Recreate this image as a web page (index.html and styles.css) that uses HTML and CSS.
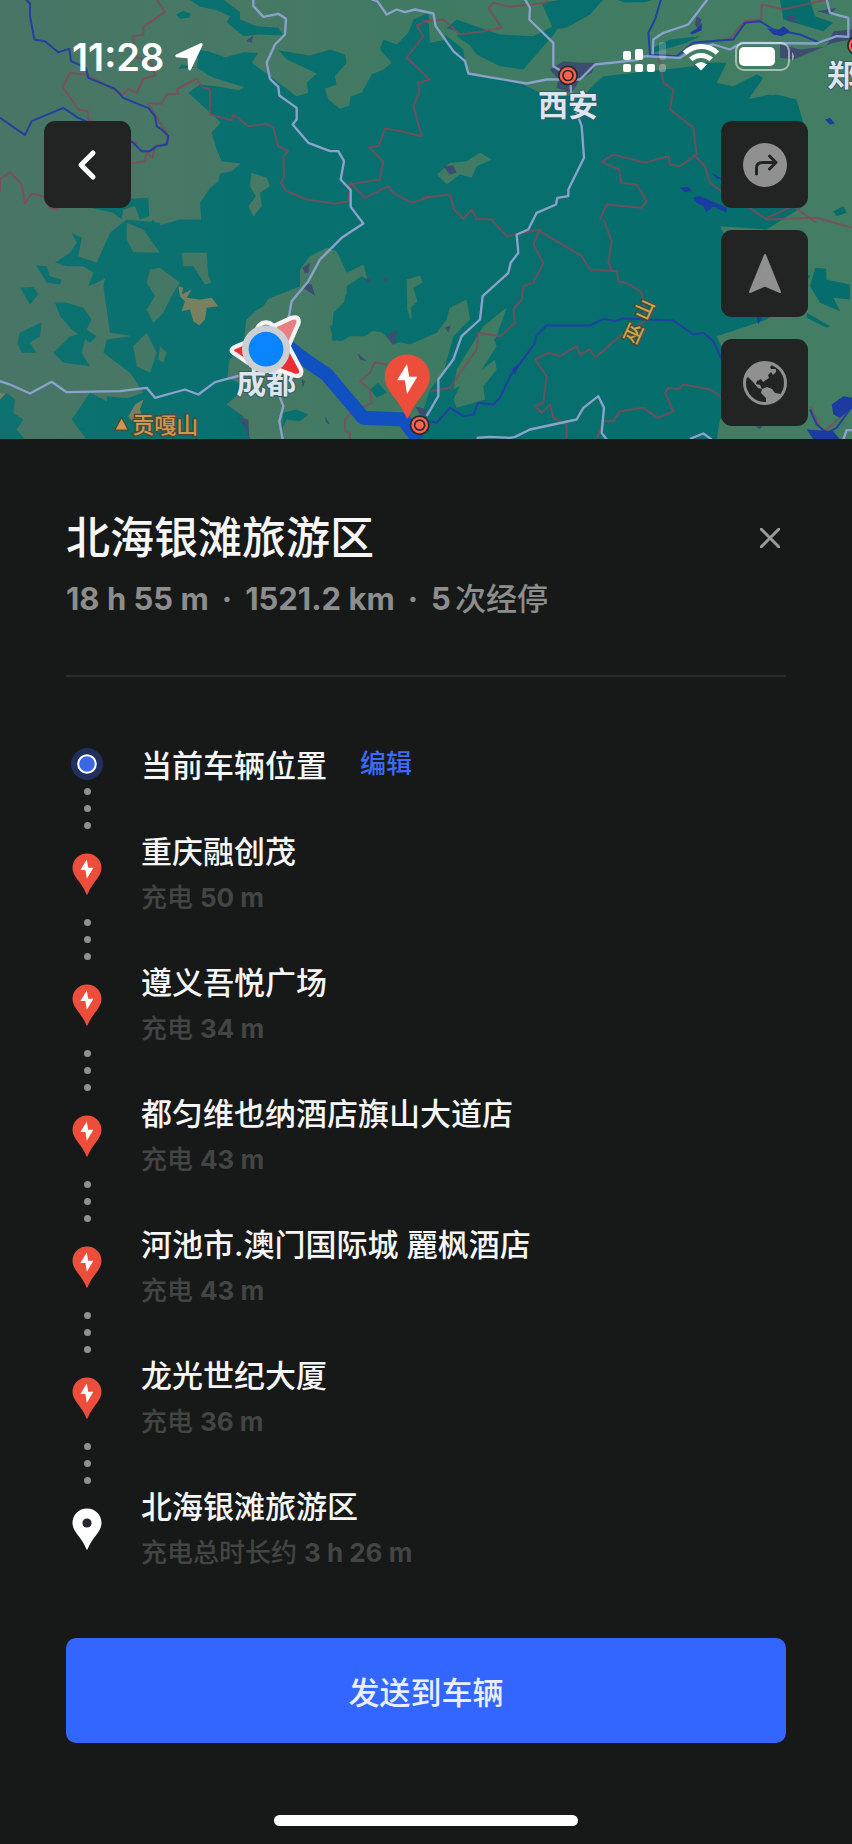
FILE: index.html
```html
<!DOCTYPE html>
<html lang="zh-CN">
<head>
    <meta charset="UTF-8">
    <meta name="viewport" content="width=device-width, initial-scale=1.0">
    <title>北海银滩旅游区</title>
    <link rel="stylesheet" href="styles.css">
</head>
<body>
<svg class="symbols" aria-hidden="true">
    <symbol id="charge-pin" viewBox="0 0 30 42">
        <path fill="#ed4d3b" d="M15 0.5C6.8 0.5 0.5 6.8 0.5 14.8C0.5 19 2.4 22.4 5 26C8.500 30.500 12.500 36 14.200 40.800Q15 42.600 15.800 40.800C17.500 36 21.500 30.500 25 26C27.600 22.400 29.500 19 29.500 14.800C29.500 6.800 23.200 0.500 15 0.500Z"/>
        <path fill="#fff" d="M14.800 6.600L8.400 17H13.400L14.800 25.800L21.400 14.800H16.200Z"/>
    </symbol>
    <symbol id="place-pin" viewBox="0 0 30 42">
        <path fill="#fff" d="M15 0.5C6.8 0.5 0.5 6.8 0.5 14.8C0.5 19 2.4 22.4 5 26C8.500 30.500 12.500 36 14.200 40.800Q15 42.600 15.800 40.800C17.500 36 21.500 30.500 25 26C27.600 22.400 29.500 19 29.500 14.800C29.500 6.800 23.200 0.500 15 0.500Z"/>
        <circle cx="15" cy="15" r="4.600" fill="#25272e"/>
    </symbol>
    <symbol id="city" viewBox="0 0 60 60">
        <circle cx="30" cy="30" r="29" fill="#2b2729"/>
        <circle cx="30" cy="30" r="24" fill="#fb6250"/>
        <circle cx="30" cy="30" r="17" fill="#2b2729"/>
        <circle cx="30" cy="30" r="12" fill="#fb6250"/>
    </symbol>
</svg>

<header class="map">
    <svg class="map-canvas" viewBox="0 0 2556 1320" preserveAspectRatio="xMidYMid slice" role="img" aria-label="路线地图">
        <defs>
            <linearGradient id="land" gradientUnits="userSpaceOnUse" x1="0" y1="0" x2="2556" y2="0">
                <stop offset="0" stop-color="#487566"/>
                <stop offset="0.3" stop-color="#477965"/>
                <stop offset="0.5" stop-color="#3f7a62"/>
                <stop offset="1" stop-color="#437e64"/>
            </linearGradient>
            <linearGradient id="forest" gradientUnits="userSpaceOnUse" x1="0" y1="0" x2="2556" y2="0">
                <stop offset="0" stop-color="#0d7270"/>
                <stop offset="0.3" stop-color="#08706f"/>
                <stop offset="1" stop-color="#056d6b"/>
            </linearGradient>
        </defs>
        <rect width="2556" height="1320" fill="url(#forest)"/>

        <!-- open land -->
        <g fill="url(#land)">
            <path d="M0 0H1680L1640 30L1660 80L1600 110L1500 105L1440 85L1370 60L1330 95L1340 120L1290 130L1285 40L1240 60L1225 100L1190 135L1150 120L1140 150L1175 190L1150 210L1115 225L1085 280L1052 290L1048 318L1020 328L985 300L975 268L1010 255L1005 230L1040 190L1035 165L990 150L930 168L835 152L860 180L950 222L920 250L925 280L890 290L830 245L755 190L775 160L730 158L650 180L600 150L590 205L640 235L690 250L735 262L715 272L660 262L600 255L565 280L625 335L662 368L635 400L650 450L665 485L722 492L695 515L660 522L655 545L630 565L600 610L605 680L580 720L560 760L480 700L460 660L440 680L480 750L435 790L330 770L310 860L330 1000L400 1010L450 1130L430 1200L320 1190L330 1320H0Z"/>
            <path d="M1266 60L1310 85L1390 150L1400 220L1550 245L1640 290L1760 280L1800 235L1870 190H2180L2150 250L2200 260L2270 225L2290 235L2245 300L2330 285L2390 300L2410 370V620L2300 690L2160 680L2180 720L2350 770L2430 830L2400 880L2300 960L2150 1010L2180 1080L2300 1180L2160 1260L2150 1320H2556V0H1960L1900 20L1850 0H1740L1690 40L1670 90L1640 165L1570 210L1500 200L1430 165L1380 100Z"/>
            <path d="M1570 210L1640 130L1700 60L1850 10L2290 0L2300 70L2180 130L2080 200L1810 230L1740 290L1620 285Z"/>
            <path d="M980 745L1010 755L1040 820L1090 795L1105 850L1060 860L1035 890L1025 960L990 980L1000 1025L1100 990L1150 1000L1180 1035L1250 1010L1300 950L1400 900L1410 960L1360 1010L1330 1120L1290 1170L1240 1320H750L730 1250L680 1215L740 1160L670 1130L690 1080L730 1040L740 950L790 920L830 860L900 810L930 770Z"/>
            <path d="M1220 840L1260 828L1268 848L1240 865L1252 905L1232 925L1238 980L1222 930Z"/>
            <path d="M1311 525L1350 490L1400 485L1440 460L1475 480L1430 500L1415 535L1380 525L1340 555Z"/>
            <path d="M445 770L490 740L470 690L560 700L610 660L600 720L540 770L560 800L620 830L632 850L618 857L580 810L545 800L530 870L540 900L490 960L470 1010L500 1060L450 1040Z"/>
            <path d="M755 520L800 535L810 560L780 580L785 620L760 650L745 620L768 590L750 560Z"/>
            <path d="M1520 924L1490 1010L1430 1090L1400 1150L1360 1170L1370 1110L1450 980Z"/>
            <path d="M1440 1040L1480 1015L1490 1040L1400 1180L1360 1200Z"/>
            <path d="M1485 1080L1490 1110L1450 1160L1455 1200L1370 1225L1360 1200L1420 1130Z"/>
        </g>

        <!-- forest patches -->
        <g fill="url(#forest)">
            <path d="M568 0L600 22L650 32L690 50L680 68L700 85L730 110L780 105L850 108L835 85L770 80L720 60L720 38L690 15L670 0Z"/>
            <path d="M528 45L550 34L572 42L568 55L540 58Z"/>
            <path d="M580 150L625 155L680 175L740 160L760 180L755 190L830 245L835 300L740 265L690 250L620 225Z"/>
            <path d="M590 205L535 208L545 195Z"/>
            <path d="M270 625L350 600L445 595L448 650L420 660L405 620L370 630L365 660L340 640Z"/>
            <path d="M1545 115L1500 150L1450 165L1370 110L1390 85L1450 95Z"/>
            <path d="M1625 10L1690 0H1810L1770 45L1700 85L1660 90Z"/>
            <path d="M2340 0H2430L2445 50L2500 70L2470 95L2350 60Z"/>
            <path d="M1960 145L2010 120L2100 110L2060 130L1960 160Z"/>
            <path d="M2240 300L2310 285L2380 310L2410 370H2160L2180 330Z"/>
            <path d="M2440 825L2445 805L2478 808L2480 840L2550 855V900L2500 895L2520 935L2460 910L2430 860Z"/>
            <path d="M2420 940L2490 980L2480 985L2420 955ZM2500 635L2530 620L2540 640L2510 650Z"/>
            <path d="M215 700L245 715L235 770L290 790L330 700L380 660L480 670L490 730L430 770L400 800L330 830L290 850L265 860L280 820L250 800L200 800L165 790L210 760L230 730Z"/>
            <path d="M108 797L140 800L150 830L185 840L180 855L140 850ZM60 865L100 862L115 885L90 915Z"/>
            <path d="M335 720L540 660H900V860L800 900L740 960L690 1060L680 1160L640 1200L560 1320H380L400 1240L350 1250L340 1210L430 1180L390 1120L310 1060L320 1020L390 1010L370 970L385 920L400 880L405 820L300 800Z"/>
            <path d="M165 910L195 908L250 925L275 960L260 990L290 1010L270 1030L215 990L180 950Z"/>
            <path d="M60 1000L125 968L120 1010L90 1030L110 1060L65 1060L52 1030ZM160 1060L210 1010L260 1000L245 1060L270 1100L190 1090Z"/>
            <path d="M20 1180L45 1200L40 1240L70 1260L50 1290L75 1320H0V1200ZM215 1260L270 1180L330 1210L350 1320H260Z"/>
            <path d="M1040 860L1085 830L1120 850L1105 900L1125 950L1200 990L1270 920H1350L1340 960L1310 1000L1230 1035L1170 1020L1130 985L1095 1010L1050 1010L1025 1025L995 1020L1000 940L1040 900Z"/>
            <path d="M850 1240L890 1230L925 1245L900 1265L860 1260L845 1290ZM1110 1170L1135 1150L1160 1180L1130 1195Z"/>
        </g>

        <!-- land showing through the western forest -->
        <g fill="#447865">
            <path d="M450 810L480 805L540 850L520 880L490 940L460 970L440 930L465 890L440 850Z"/>
            <path d="M545 760H620L625 830L635 850L615 855L580 800H550Z"/>
            <path d="M400 1040L440 1000L470 1060L450 1120L410 1100ZM480 1040L500 1060L490 1090L475 1080Z"/>
            <path d="M380 670L430 690L480 760L400 758L380 720Z"/>
        </g>

        <!-- bare rock -->
        <g fill="#79805f">
            <path d="M535 860L550 865L545 885L575 870L560 895L600 900L635 895L655 920L620 925L615 960L598 978L580 965L570 930L545 935L555 905L540 890Z"/>
            <path d="M430 1200L420 1230L428 1255L400 1270L385 1250L405 1215ZM0 1180L15 1185L0 1200Z"/>
        </g>

        <!-- built-up areas -->
        <g fill="#3d4d70">
            <path d="M1650 210L1690 185L1740 190L1790 190L1775 220L1740 240L1715 280L1670 265L1675 240Z"/>
            <path d="M1330 500L1360 498L1370 520L1350 525ZM2340 135L2400 150L2480 140L2500 95L2556 90V120L2500 130L2430 160L2380 180L2340 175Z"/>
            <path d="M2090 50L2105 60L2095 90L2085 75ZM2360 50L2385 48L2388 70L2365 65ZM2450 35L2510 25L2490 45Z"/>
            <path d="M908 805L930 790L925 820L915 822ZM915 850L935 855L945 888L912 868ZM1160 1010L1190 990L1188 1030L1178 1035ZM1072 1060L1100 1085L1080 1080Z"/>
            <path d="M1095 838H1112V850H1098ZM1150 832L1165 838L1158 850ZM715 1255L745 1260L748 1320L735 1280ZM975 1250L990 1275L978 1268ZM905 1140L915 1145L908 1165Z"/>
            <path d="M738 125L760 107L755 130ZM1335 985L1352 978L1345 1000ZM2050 560L2075 570L2060 580ZM2260 1275H2290L2280 1290ZM1245 1220L1280 1230L1270 1260Z"/>
        </g>

        <!-- provincial borders -->
        <g class="border">
            <path d="M470 0L495 38L430 82V105L400 110V170L455 190L465 228L430 238L410 280L385 268L370 285L340 268L255 225L210 220L188 262L235 330L262 335L265 360L408 430L400 440"/>
            <path d="M395 492L435 485L440 458L458 475L465 440L505 430L500 400L480 370L445 312L485 312L500 285L535 283L530 270L590 237L605 262L630 270V345L695 362L700 345L745 380L800 373L820 385L835 440L865 455L850 470L852 530L843 550L860 575L920 600L1005 613L1045 605L1052 550L1095 595L1165 560L1180 580L1235 610L1290 592"/>
            <path d="M0 575V540L30 518L65 555L75 612L95 582L130 590L150 625L175 630"/>
            <path d="M1290 62L1250 78L1270 110L1220 175L1290 240L1255 250L1258 280L1240 320L1265 410L1190 392L1155 388L1135 440L1107 443L1150 485L1140 540L1045 555"/>
            <path d="M1270 65L1330 60L1380 105L1450 95L1505 85L1465 25L1480 10L1530 22L1640 10V0"/>
            <path d="M1976 175L1990 250L2020 270L2010 330L2080 385L2090 465L2040 500L2010 495L2005 470L1935 490L1840 465L1805 487L1858 510L1863 550L1910 555L1940 605L1925 625L1820 615L1800 660"/>
            <path d="M2080 465L2115 500L2130 550L2170 580L2240 620L2300 660L2450 655L2556 685"/>
            <path d="M1266 595L1350 585L1363 630L1390 658L1415 630L1430 658L1475 660L1520 710L1620 690L1600 735L1630 790L1600 850L1570 860L1565 900L1540 930L1545 970L1500 1010L1435 1000L1430 1050L1350 1165L1290 1175"/>
            <path d="M1620 695L1745 770L1770 810L1850 815L1855 845L1890 855L1925 880L1935 935L1935 965L1860 1010L1785 1075L1770 1050L1740 1065L1730 1040L1680 1070L1645 1060L1605 1080L1640 1130L1630 1210L1605 1220L1625 1240L1650 1215L1660 1255L1700 1275V1320"/>
            <path d="M1810 660L1835 725L1825 790L1835 812M1790 1320L1810 1265L1840 1265L1860 1235L1930 1225L1975 1255L2020 1235L1995 1180L2005 1165L2035 1170L2050 1155L2130 1170L2190 1210"/>
            <path d="M1160 1095L1125 1088L1110 1120L1080 1145L1110 1170L1115 1210L1050 1245L1035 1260V1295L1050 1300V1320"/>
            <path d="M2140 125L2190 118L2235 65L2284 60L2285 15L2350 30L2480 0M2300 655L2380 620L2450 670M2430 1220L2470 1300L2556 1220"/>
        </g>

        <!-- rivers -->
        <g class="river">
            <path d="M78 0L90 12L90 50L103 120L135 125L175 158L208 148L213 185L258 205L265 235L345 268L370 295L430 320L445 325L465 350L470 380L485 390L505 410L500 435L470 440L450 455L425 455L400 430L235 355L190 325L95 365L75 407L0 355"/>
            <path d="M1983 0L1965 60L1945 100L1950 165L2030 170L2080 130L2130 125L2200 120L2235 70L2280 65L2320 90L2400 105L2460 130L2510 110"/>
            <path d="M1290 1265L1310 1270L1350 1225L1390 1250L1420 1245L1435 1210L1480 1215L1500 1195L1530 1130L1555 1100L1605 1030L1608 1010L1640 978L1770 978L1810 958L1845 965L1870 957L2020 963L2080 1005L2110 1000L2140 1025L2165 1080"/>
            <path d="M2430 1230L2450 1275L2480 1300L2510 1285L2556 1220"/>
        </g>
        <g fill="#1b3ba1">
            <path d="M2300 85L2330 95L2350 80L2370 95L2345 110L2320 105ZM2070 100L2095 85L2105 70V92L2075 105Z"/>
            <path d="M2040 565L2065 562L2075 575L2055 578ZM2080 595L2100 590L2125 600L2180 625V640L2140 620L2120 638L2110 620L2090 610ZM2135 520L2170 540L2150 538ZM2475 360L2490 355L2505 372L2490 375Z"/>
            <path d="M2495 1215L2530 1190L2556 1195V1225L2520 1255L2500 1245ZM2270 950L2285 955L2275 975ZM2420 1290L2500 1295L2520 1320H2440ZM1535 1110L1560 1090L1545 1125Z"/>
        </g>

        <!-- motorways -->
        <path class="road" d="M760 0V20L790 52L835 43L858 58L855 105L825 135L800 190L810 238L835 262L838 288L890 325V360L878 375L925 430L990 455L1015 455L1032 485L1022 540L1052 572V622L1090 672L1025 715L960 780L925 845L875 905L865 960"/>
        <path class="road" d="M1115 0L1132 5L1160 45L1190 30L1215 38L1245 30L1300 42L1307 80L1360 155L1395 185L1405 222L1480 235L1580 252L1640 240L1740 240L1785 195L1910 182L1935 170L2040 175L2080 150L2140 135L2190 150L2225 130L2450 132L2510 110L2545 112V55L2490 40L2480 0"/>
        <path class="road" d="M1575 0L1590 25L1588 60L1660 130V200L1710 230L1715 300L1745 380L1752 475L1705 570V590L1672 595L1668 615L1610 640L1585 690L1550 705L1555 760L1532 790L1525 820L1448 890L1440 960L1385 1010L1360 1080L1315 1140V1190L1280 1250"/>
        <path class="road" d="M2122 0L2065 75L1990 100L1960 120L1958 165"/>
        <path class="road" d="M0 1145L30 1155L90 1182L155 1147L200 1178L360 1175L440 1165L465 1195L555 1170L595 1185L645 1148L720 1128M835 1180L850 1220L838 1265L848 1320"/>
        <path class="road" d="M1430 1315L1470 1312L1530 1315L1545 1312L1590 1290L1730 1260L1750 1225L1795 1190L1812 1225L1805 1300L1820 1320M2070 1318L2110 1302L2135 1320M2530 1320L2540 1292H2556"/>

        <path class="route" d="M850 1030L900 1070L980 1125L1090 1255L1210 1260L1255 1320"/>

        <use href="#city" x="1673" y="197" width="62" height="62"/>
        <use href="#city" x="2540" y="107" width="62" height="62"/>
        <use href="#city" x="1228" y="1246" width="62" height="62"/>

        <g class="place">
            <text x="1614" y="350">西安</text>
            <text x="2481" y="259">郑</text>
            <text x="709" y="1180">成都</text>
        </g>
        <g class="peak">
            <path d="M365 1258L347 1290H382Z"/>
            <text x="397" y="1301">贡嘎山</text>
            <text class="range" transform="translate(1908 1038) rotate(-66)">巫</text>
            <text class="range" transform="translate(1940 966) rotate(-66)">山</text>
        </g>

        <use href="#charge-pin" x="1152" y="1063" width="140" height="196"/>

        <!-- vehicle heading and position -->
        <g stroke="#f4f4f4" stroke-width="13" stroke-linejoin="round">
            <circle cx="798" cy="997" r="28" fill="#2a55a8"/>
            <path fill="#ed2f35" d="M735 1030L708 1041Q682 1052 708 1065L745 1090ZM860 1030L903 1110Q908 1134 882 1128L812 1102Z"/>
            <path fill="#e97f80" d="M820 980L875 955Q900 948 895 972L862 1048Z"/>
        </g>
        <circle cx="798" cy="1049" r="72" fill="#cccfd3"/>
        <circle cx="798" cy="1049" r="52" fill="#0a84ff"/>
    </svg>

    <div class="status-bar">
        <div class="status-time">
            <span>11:28</span>
            <svg width="30" height="30" viewBox="0 0 30 30" fill="#fff" aria-hidden="true">
                <path d="M26.500 1.200L2.200 12.600Q0.200 14 2.400 15.200L13.600 16.200L14.200 27Q15 29.600 17 27.400L28.600 3.200Q29 0.400 26.500 1.200Z"/>
            </svg>
        </div>
        <div class="status-icons">
            <svg width="44" height="30" viewBox="0 0 44 30" fill="#fff" aria-hidden="true">
                <rect x="0" y="9" width="8" height="9" rx="2"/>
                <rect x="0" y="22" width="8" height="8" rx="2"/>
                <rect x="12" y="7" width="8" height="11" rx="2"/>
                <rect x="12" y="22" width="8" height="8" rx="2"/>
                <rect x="24" y="22" width="8" height="8" rx="2"/>
                <rect x="36" y="0" width="7" height="18" rx="2" opacity="0.2"/>
                <rect x="36" y="22" width="7" height="8" rx="2" opacity="0.3"/>
            </svg>
            <svg width="38" height="28" viewBox="0 0 38 28" aria-hidden="true">
                <g fill="none" stroke="#fff" stroke-width="5">
                    <path d="M2.500 10A24 24 0 0 1 35.500 10"/>
                    <path d="M8.800 16.400A15 15 0 0 1 29.200 16.400"/>
                </g>
                <path fill="#fff" d="M13 21.500Q19 16.500 25 21.500L19 27.500Z"/>
            </svg>
            <svg width="60" height="30" viewBox="0 0 60 30" aria-hidden="true">
                <rect x="1" y="1" width="53" height="27" rx="8" fill="none" stroke="#fff" stroke-opacity="0.5" stroke-width="2"/>
                <rect x="4" y="5" width="36" height="19" rx="5" fill="#fff"/>
                <path d="M57 10Q61 14.500 57 19Z" fill="#fff" opacity="0.5"/>
            </svg>
        </div>
    </div>

    <div class="map-controls">
        <button class="map-button" aria-label="返回">
            <svg width="30" height="32" viewBox="0 0 30 32" aria-hidden="true">
                <path d="M20 4L8 16L20 28" fill="none" stroke="#fff" stroke-width="5" stroke-linecap="round" stroke-linejoin="round"/>
            </svg>
        </button>
        <div class="map-tools">
            <button class="map-button" aria-label="路线">
                <svg width="44" height="44" viewBox="0 0 44 44" aria-hidden="true">
                    <circle cx="22" cy="22" r="22" fill="#8f908f"/>
                    <path d="M13.500 31V25Q13.500 19.500 19.500 19.500H32M26.500 13L33 19.500L26.500 26" fill="none" stroke="#222423" stroke-width="3" stroke-linecap="round" stroke-linejoin="round"/>
                </svg>
            </button>
            <button class="map-button" aria-label="定位">
                <svg width="44" height="44" viewBox="0 0 44 44" aria-hidden="true">
                    <path d="M22 3L37 40L22 33.500L7 40Z" fill="#8f908f" stroke="#8f908f" stroke-width="2" stroke-linejoin="round"/>
                </svg>
            </button>
            <button class="map-button" aria-label="地图图层">
                <svg width="44" height="44" viewBox="0 0 44 44" aria-hidden="true">
                    <circle cx="22" cy="22" r="20.500" fill="none" stroke="#8f908f" stroke-width="3"/>
                    <path fill="#8f908f" d="M3 18L5 11L13 3L22 1L29 4L27 6L28 8L33 8L33 11L30 14L28 11L25 14L26 17L20 21L18 18L14 20L13 23L17 24L19 28L15 27L10 21L5 16Z"/>
                    <path fill="#8f908f" d="M19 28L24 26L29 28L32 32L38 33L33 39L26 42H23L23 37L18 32Z"/>
                </svg>
            </button>
        </div>
    </div>
</header>

<main class="sheet">
    <div class="trip-header">
        <h1>北海银滩旅游区</h1>
        <button class="close" aria-label="关闭">
            <svg width="20" height="20" viewBox="0 0 20 20" aria-hidden="true">
                <path d="M1 1L19 19M19 1L1 19" stroke="#999a99" stroke-width="3" stroke-linecap="round"/>
            </svg>
        </button>
    </div>
    <p class="trip-summary"><b>18 h 55 m</b><b>·</b><b>1521.2 km</b><b>·</b><span class="stop-count"><b>5</b>次经停</span></p>

    <ol class="stops">
        <li class="stop start">
            <div class="marker">
                <svg width="32" height="32" viewBox="0 0 32 32" aria-hidden="true">
                    <circle cx="16" cy="16" r="16" fill="#202f5c"/>
                    <circle cx="16" cy="16" r="8.800" fill="#3d68e4" stroke="#fff" stroke-width="2"/>
                </svg>
                <span class="dots"><i></i><i></i><i></i></span>
            </div>
            <h2>当前车辆位置</h2>
            <a class="edit" href="#">编辑</a>
        </li>
        <li class="stop">
            <div class="marker">
                <svg width="30" height="42" aria-hidden="true"><use href="#charge-pin"/></svg>
                <span class="dots"><i></i><i></i><i></i></span>
            </div>
            <div>
                <h2>重庆融创茂</h2>
                <p>充电 <b>50 m</b></p>
            </div>
        </li>
        <li class="stop">
            <div class="marker">
                <svg width="30" height="42" aria-hidden="true"><use href="#charge-pin"/></svg>
                <span class="dots"><i></i><i></i><i></i></span>
            </div>
            <div>
                <h2>遵义吾悦广场</h2>
                <p>充电 <b>34 m</b></p>
            </div>
        </li>
        <li class="stop">
            <div class="marker">
                <svg width="30" height="42" aria-hidden="true"><use href="#charge-pin"/></svg>
                <span class="dots"><i></i><i></i><i></i></span>
            </div>
            <div>
                <h2>都匀维也纳酒店旗山大道店</h2>
                <p>充电 <b>43 m</b></p>
            </div>
        </li>
        <li class="stop">
            <div class="marker">
                <svg width="30" height="42" aria-hidden="true"><use href="#charge-pin"/></svg>
                <span class="dots"><i></i><i></i><i></i></span>
            </div>
            <div>
                <h2>河池市.澳门国际城 麗枫酒店</h2>
                <p>充电 <b>43 m</b></p>
            </div>
        </li>
        <li class="stop">
            <div class="marker">
                <svg width="30" height="42" aria-hidden="true"><use href="#charge-pin"/></svg>
                <span class="dots"><i></i><i></i><i></i></span>
            </div>
            <div>
                <h2>龙光世纪大厦</h2>
                <p>充电 <b>36 m</b></p>
            </div>
        </li>
        <li class="stop">
            <div class="marker">
                <svg width="30" height="42" aria-hidden="true"><use href="#place-pin"/></svg>
            </div>
            <div>
                <h2>北海银滩旅游区</h2>
                <p>充电总时长约 <b>3 h 26 m</b></p>
            </div>
        </li>
    </ol>

    <button class="send">发送到车辆</button>
    <div class="home-bar"></div>
</main>
</body>
</html>
```

FILE: styles.css
```css
* {
    box-sizing: border-box;
}
body {
    margin: 0;
    background: #171918;
    color: #f6f6f6;
    font-family: Inter, "Noto Sans CJK SC", sans-serif;
    font-weight: 500;
}
h1, h2, p, ol {
    margin: 0;
    padding: 0;
    font-weight: 500;
}
b {
    font-weight: 700;
}
button {
    border: none;
    padding: 0;
    font-family: inherit;
    cursor: pointer;
}
svg {
    display: block;
}
.symbols {
    position: absolute;
    width: 0;
    height: 0;
}

/* map */
.map {
    position: relative;
    padding: 34px 44px 13px;
    overflow: hidden;
    background: #056d6b;
}
.map-canvas {
    position: absolute;
    inset: 0;
    width: 100%;
    height: 100%;
}
.border path {
    fill: none;
    stroke: #84485a;
    stroke-width: 6;
    stroke-opacity: 0.8;
    stroke-linejoin: round;
}
.river path {
    fill: none;
    stroke: #2140a0;
    stroke-width: 6;
    stroke-linejoin: round;
}
.road {
    fill: none;
    stroke: #8ba3cc;
    stroke-width: 7;
    stroke-linejoin: round;
}
.route {
    fill: none;
    stroke: #1050c0;
    stroke-width: 42;
    stroke-linejoin: round;
}
.place {
    fill: #dde5ee;
    stroke: #34555c;
    stroke-width: 5;
    paint-order: stroke;
    font-size: 90px;
    font-weight: 700;
}
.peak {
    fill: #d0954e;
    stroke: #4a4a38;
    stroke-width: 8;
    paint-order: stroke;
    font-size: 66px;
}
.range {
    fill: #c6a650;
    font-size: 60px;
}

/* status bar */
.status-bar {
    position: relative;
    display: flex;
    justify-content: space-between;
    align-items: center;
    height: 46px;
    padding: 0 13px 0 28px;
    color: #fff;
}
.status-time {
    display: flex;
    align-items: center;
    gap: 10px;
    font-size: 38px;
    font-weight: 600;
    line-height: 46px;
}
.status-icons {
    display: flex;
    align-items: center;
    gap: 15px;
}

/* floating map buttons */
.map-controls {
    position: relative;
    display: flex;
    justify-content: space-between;
    align-items: flex-start;
    padding-top: 41px;
}
.map-tools {
    display: grid;
    gap: 22px;
}
.map-button {
    display: grid;
    place-items: center;
    width: 87px;
    height: 87px;
    border-radius: 11px;
    background: #222423;
}

/* trip details */
.sheet {
    padding: 69px 66px 17px;
    background: #171918;
}
.trip-header {
    display: flex;
    justify-content: space-between;
    align-items: center;
}
.trip-header h1 {
    font-size: 44px;
    line-height: 60px;
}
.close {
    display: grid;
    place-items: center;
    width: 32px;
    height: 32px;
    background: none;
}
.trip-summary {
    display: flex;
    gap: 13px;
    padding: 11px 0 56px;
    border-bottom: 2px solid #2b2d2d;
    color: #8c8d8c;
    font-size: 31px;
    line-height: 40px;
}
.stop-count b {
    margin-right: 4px;
}

/* stops */
.stops {
    padding-top: 66px;
    list-style: none;
}
.stop {
    display: flex;
    gap: 33px;
}
.marker {
    display: flex;
    flex-direction: column;
    align-items: center;
    width: 42px;
    padding-top: 24px;
}
.stop h2 {
    font-size: 31px;
    line-height: 46px;
}
.stop p {
    color: #434545;
    font-size: 26px;
    line-height: 46px;
}
.start .marker {
    padding-top: 5px;
}
.dots {
    display: grid;
    gap: 10px;
    padding-top: 24px;
}
.start .dots {
    padding-top: 8px;
}
.dots i {
    width: 7px;
    height: 7px;
    border-radius: 50%;
    background: #8f908f;
}
.edit {
    color: #3b6cf6;
    font-size: 26px;
    line-height: 42px;
    text-decoration: none;
}

/* footer */
.send {
    display: block;
    width: 100%;
    height: 105px;
    margin-top: 62px;
    border-radius: 10px;
    background: #3366ff;
    color: #eaefff;
    font-size: 31px;
    font-weight: 500;
}
.home-bar {
    width: 304px;
    height: 11px;
    margin: 72px auto 0;
    border-radius: 6px;
    background: #fff;
}
```
